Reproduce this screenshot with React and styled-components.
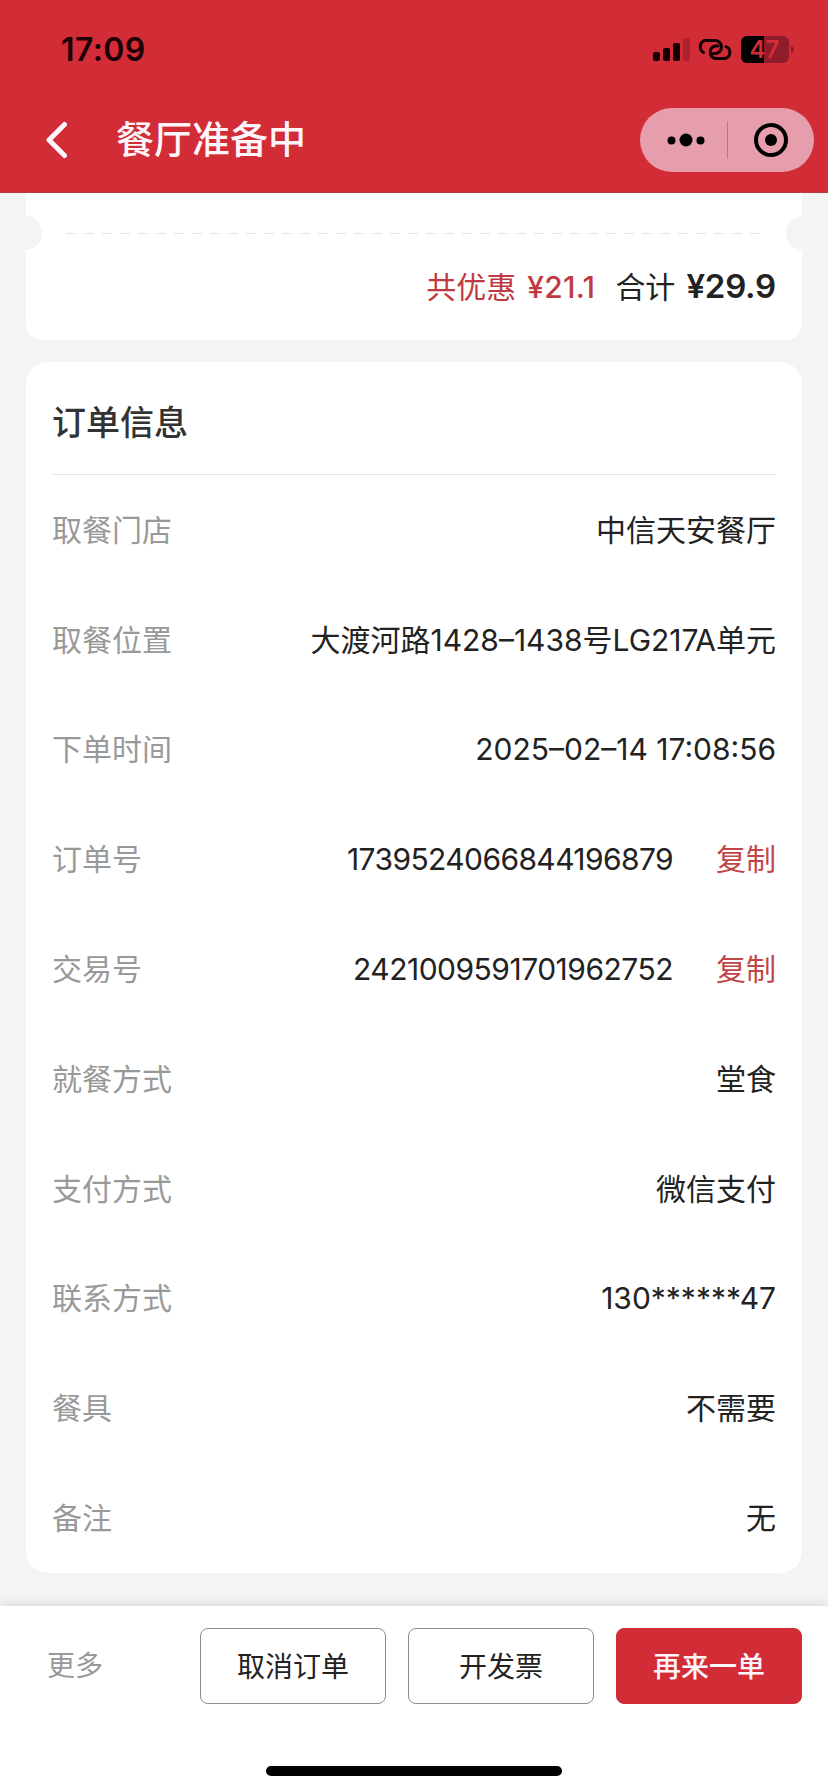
import React from "react";
import styled, { createGlobalStyle } from "styled-components";

//////////////Style Components////////////////////////////////
const GlobalStyle = createGlobalStyle`
  * {
    box-sizing: border-box;
  }
  body {
    margin: 0;
    background: #f4f4f4;
    font-family: "Inter", "Noto Sans CJK SC", sans-serif;
    color: #222;
  }
`;

const Page = styled.div`
  width: 828px;
  height: 1792px;
  display: flex;
  flex-direction: column;
  overflow: hidden;
`;

const Header = styled.header`
  height: 193px;
  flex: none;
  background: #d22c37;
  border-bottom: 1px solid #b93a44;
`;

const StatusBar = styled.div`
  display: flex;
  align-items: center;
  justify-content: space-between;
  height: 100px;
  padding: 0 34px 0 61px;
`;

const Clock = styled.span`
  font-size: 32px;
  font-weight: 600;
  line-height: 40px;
  letter-spacing: 0.4px;
  color: #1c0003;
`;

const StatusIcons = styled.div`
  display: flex;
  align-items: center;
`;

const NavBar = styled.div`
  display: flex;
  align-items: center;
  height: 80px;
  padding: 0 14px 0 45px;
`;

const NavTitle = styled.h1`
  flex: 1;
  margin: 0 0 0 47px;
  font-size: 38px;
  font-weight: 500;
  line-height: 48px;
  padding-bottom: 2px;
  color: #fff5fa;
`;

const Capsule = styled.div`
  display: flex;
  align-items: center;
  width: 174px;
  height: 64px;
  border-radius: 32px;
  background: #e69dac;
`;

const CapsuleButton = styled.button`
  display: flex;
  align-items: center;
  justify-content: center;
  width: ${(props) => (props.$divider ? 88 : 86)}px;
  height: 38px;
  padding: 0 0 0 ${(props) => (props.$divider ? 5 : 0)}px;
  border: none;
  border-right: ${(props) => (props.$divider ? "1px solid #b97484" : "none")};
  background: none;
`;

const Content = styled.main`
  flex: 1;
  padding: 0 26px;
`;

const SummaryCard = styled.section`
  position: relative;
  display: flex;
  flex-direction: column;
  height: 147px;
  border-radius: 0 0 16px 16px;
  background: #fff;
`;

const Notch = styled.span`
  position: absolute;
  top: 23px;
  ${(props) => props.$side}: -18px;
  width: 34px;
  height: 34px;
  border-radius: 50%;
  background: #f4f4f4;
`;

const Perforation = styled.div`
  height: 1px;
  margin: 40px 42px 0 40px;
  background: repeating-linear-gradient(
    90deg,
    #e4e4e4 0 10px,
    transparent 10px 18px
  );
`;

const SummaryLine = styled.div`
  display: flex;
  align-items: baseline;
  justify-content: flex-end;
  padding: 30px 26px 0 0;
  font-size: 30px;
  line-height: 44px;
`;

const Discount = styled.span`
  margin-right: 20px;
  color: #bf3a42;
`;

const Amount = styled.span`
  margin-left: 11px;
  font-size: ${(props) => (props.$large ? 33 : 30)}px;
  font-weight: ${(props) => (props.$large ? 600 : 500)};
  letter-spacing: ${(props) => (props.$large ? -0.2 : 0.3)}px;
`;

const InfoCard = styled.section`
  height: 1211px;
  margin-top: 22px;
  padding: 0 26px;
  border-radius: 22px;
  background: #fff;
`;

const CardTitle = styled.h2`
  height: 113px;
  margin: 0;
  padding-top: 37px;
  border-bottom: 1px solid #e4e4e4;
  font-size: 34px;
  font-weight: 500;
  line-height: 48px;
  color: #333;
`;

const Row = styled.div`
  display: flex;
  align-items: center;
  height: 109.8px;
  font-size: 30px;
  line-height: 44px;
`;

const Label = styled.span`
  flex: 1;
  color: #999;
`;

const Value = styled.span`
  letter-spacing: ${(props) => props.$tracking || 0}px;
  color: #222;
`;

const CopyButton = styled.button`
  margin-left: 43px;
  padding: 0;
  border: none;
  background: none;
  font: inherit;
  color: #c0464a;
`;

const Footer = styled.footer`
  position: relative;
  display: flex;
  flex-direction: column;
  align-items: center;
  flex: none;
  height: 186px;
  background: #fff;
  box-shadow: 0 0 12px rgba(0, 0, 0, 0.15);
`;

const Actions = styled.div`
  display: flex;
  align-items: center;
  gap: 22px;
  width: 100%;
  padding: 22px 26px 0 47px;
`;

const More = styled.span`
  flex: 1;
  font-size: 28px;
  line-height: 40px;
  color: #999;
`;

const ActionButton = styled.button`
  width: 186px;
  height: 76px;
  padding: 0 0 2px;
  border: 1px solid ${(props) => (props.$primary ? "#d22c37" : "#8c8c8c")};
  border-radius: 8px;
  background: ${(props) => (props.$primary ? "#d22c37" : "#fff")};
  font-family: inherit;
  font-size: 28px;
  font-weight: ${(props) => (props.$primary ? 500 : 400)};
  color: ${(props) => (props.$primary ? "#fff5fa" : "#222")};
`;

const HomeIndicator = styled.div`
  width: 296px;
  height: 10px;
  margin-top: 62px;
  border-radius: 5px;
  background: #000;
`;

const BatteryText = styled.text`
  font-size: 24px;
  font-weight: 600;
  fill: #d22c37;
`;

/////////////////////////////////////////////////////

const rows = [
  { label: "取餐门店", value: "中信天安餐厅" },
  { label: "取餐位置", value: "大渡河路1428–1438号LG217A单元" },
  { label: "下单时间", value: "2025–02–14 17:08:56" },
  { label: "订单号", value: "1739524066844196879", tracking: -0.6, copy: true },
  { label: "交易号", value: "2421009591701962752", tracking: -0.5, copy: true },
  { label: "就餐方式", value: "堂食" },
  { label: "支付方式", value: "微信支付" },
  { label: "联系方式", value: "130******47" },
  { label: "餐具", value: "不需要" },
  { label: "备注", value: "无" },
];

function StatusGlyphs() {
  return (
    <svg width="144" height="30" viewBox="650 35 144 30">
      <g fill="#140002">
        <rect x="653" y="52" width="7" height="9" rx="2" />
        <rect x="663" y="48" width="7" height="13" rx="2" />
        <rect x="673" y="43" width="7" height="18" rx="2" />
        <rect x="683" y="38" width="7" height="23" rx="2" fill="#ab2231" />
      </g>
      <g fill="none" stroke="#140002" strokeWidth="3" strokeLinecap="round">
        <path d="M703.5 52.5 A6.7 6.7 0 0 1 704.5 40.5 H715 A6.5 6.5 0 0 1 715 53.5 H713" />
        <path d="M718 46 H715 A6.5 6.5 0 0 0 715 58.5 H725 A6.2 6.2 0 0 0 726 46.7" />
      </g>
      <path d="M747 36 H764 V63 H747 A6 6 0 0 1 741 57 V42 A6 6 0 0 1 747 36 Z" fill="#000" />
      <path d="M764 36 H783 A6 6 0 0 1 789 42 V57 A6 6 0 0 1 783 63 H764 Z" fill="#8f1c2a" />
      <path d="M791 46 Q794 47 794 49.500 Q794 52 791 53 Z" fill="#8f1c2a" />
      <BatteryText x="749.5" y="58">
        47
      </BatteryText>
    </svg>
  );
}

export default function App() {
  return (
    <Page>
      <GlobalStyle />
      <Header>
        <StatusBar>
          <Clock>17:09</Clock>
          <StatusIcons>
            <StatusGlyphs />
          </StatusIcons>
        </StatusBar>
        <NavBar>
          <svg width="24" height="38" viewBox="0 0 24 38">
            <path
              d="M19.500 3.500 L4 19 L19.500 34.500"
              fill="none"
              stroke="#fff5fa"
              strokeWidth="5"
              strokeLinecap="round"
              strokeLinejoin="round"
            />
          </svg>
          <NavTitle>餐厅准备中</NavTitle>
          <Capsule>
            <CapsuleButton $divider>
              <svg width="38" height="14" viewBox="0 0 38 14">
                <circle cx="4.500" cy="7.500" r="4" />
                <circle cx="19" cy="7" r="6.500" />
                <circle cx="33.500" cy="7.500" r="4" />
              </svg>
            </CapsuleButton>
            <CapsuleButton>
              <svg width="36" height="36" viewBox="0 0 36 36">
                <circle cx="18" cy="18" r="15" fill="none" stroke="#000" strokeWidth="4" />
                <circle cx="18" cy="18" r="6" />
              </svg>
            </CapsuleButton>
          </Capsule>
        </NavBar>
      </Header>
      <Content>
        <SummaryCard>
          <Notch $side="left" />
          <Notch $side="right" />
          <Perforation />
          <SummaryLine>
            <Discount>
              共优惠<Amount>¥21.1</Amount>
            </Discount>
            <span>
              合计<Amount $large>¥29.9</Amount>
            </span>
          </SummaryLine>
        </SummaryCard>
        <InfoCard>
          <CardTitle>订单信息</CardTitle>
          {rows.map((row) => (
            <Row key={row.label}>
              <Label>{row.label}</Label>
              <Value $tracking={row.tracking}>{row.value}</Value>
              {row.copy && <CopyButton>复制</CopyButton>}
            </Row>
          ))}
        </InfoCard>
      </Content>
      <Footer>
        <Actions>
          <More>更多</More>
          <ActionButton>取消订单</ActionButton>
          <ActionButton>开发票</ActionButton>
          <ActionButton $primary>再来一单</ActionButton>
        </Actions>
        <HomeIndicator />
      </Footer>
    </Page>
  );
}
